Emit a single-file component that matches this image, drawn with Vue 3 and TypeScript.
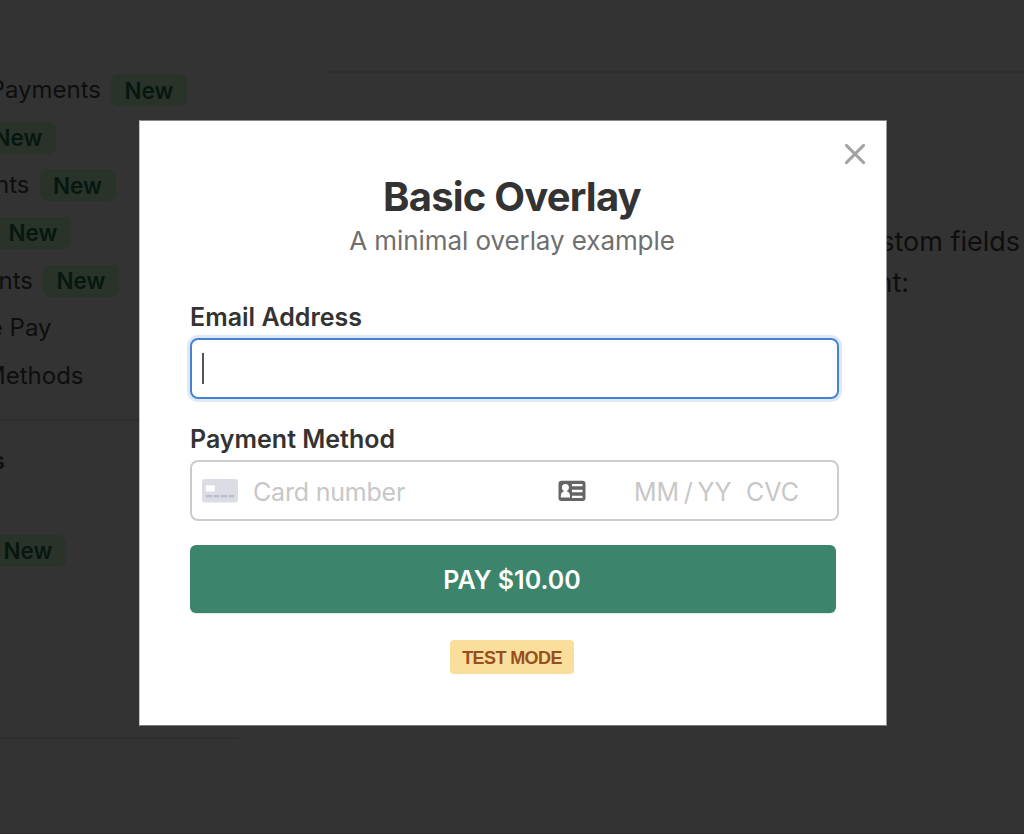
<script setup lang="ts">
interface NavItem {
  label: string
  right: number
  isNew?: boolean
}

// `right` is where each row ends, the sidebar is scrolled out to the left
const navItems: NavItem[] = [
  { label: 'Payments', right: 187, isNew: true },
  { label: '', right: 56, isNew: true },
  { label: 'Payments', right: 115.5, isNew: true },
  { label: '', right: 71, isNew: true },
  { label: 'Payments', right: 119, isNew: true },
  { label: 'Google Pay', right: 51.5 },
  { label: 'Payment Methods', right: 83.5 },
]
</script>

<template>
  <div class="page">
    <aside class="sidebar">
      <ul class="nav">
        <li v-for="(item, i) in navItems" :key="i" class="nav__item" :style="{ width: `${item.right}px` }">
          <span v-if="item.label" class="nav__label">{{ item.label }}</span>
          <span v-if="item.isNew" class="tag">New</span>
        </li>
      </ul>
      <div class="section">
        <div class="section__title">s</div>
        <div class="section__row"><span class="tag">New</span></div>
      </div>
    </aside>
    <main class="content">
      <p class="content__line content__line--first">custom fields</p>
      <p class="content__line content__line--second">payment:</p>
    </main>
  </div>

  <div class="overlay">
    <form class="modal" @submit.prevent>
      <button class="modal__close" type="button" aria-label="Close">
        <svg width="22" height="22" viewBox="0 0 22 22">
          <path d="M2.4 2.4 19.6 19.6M19.6 2.4 2.4 19.6" fill="none" stroke="#a3a3a3" stroke-width="3" stroke-linecap="round" />
        </svg>
      </button>
      <h1 class="modal__title"><span>Basic Overlay</span></h1>
      <p class="modal__subtitle"><span>A minimal overlay example</span></p>

      <div class="label label--email"><span>Email Address</span></div>
      <div class="field field--focus">
        <span class="caret" />
      </div>

      <div class="label label--payment"><span>Payment Method</span></div>
      <div class="field">
        <svg class="field__card" width="36" height="24" viewBox="0 0 36 24">
          <rect width="36" height="23.5" rx="2.4" fill="#dcdde4" />
          <rect x="3.8" y="6.3" width="9" height="6.2" rx="1" fill="#fff" />
          <path d="M4 17.2h6M11.5 17.2h6M19 17.2h6M26.5 17.2h5.5" stroke="#b8bccb" stroke-width="2.2" />
        </svg>
        <span class="field__number">Card number</span>
        <svg class="field__id" width="28" height="22" viewBox="0 0 28 22">
          <rect x="0.5" y="0.7" width="27" height="20.4" rx="3" fill="#666" />
          <circle cx="7.4" cy="7.4" r="3.5" fill="#fff" />
          <path d="M5.8 9.5h3.2v2c2 .5 3 2 3 4.8v1.3H2.8v-1.3c0-2.8 1-4.3 3-4.8z" fill="#fff" />
          <path d="M14 5.2h10.5M14 11h10.5M14 16.8h10.5" stroke="#fff" stroke-width="2.3" />
        </svg>
        <span class="field__expiry">MM / YY</span>
        <span class="field__cvc">CVC</span>
      </div>

      <button class="pay" type="submit"><span>PAY $10.00</span></button>
      <div class="mode"><span>TEST MODE</span></div>
    </form>
  </div>
</template>

<style>
body {
  margin: 0;
  background: #333;
}
</style>

<style scoped>
.page {
  display: flex;
  gap: 90px;
  box-sizing: border-box;
  width: 1024px;
  height: 834px;
  overflow: hidden;
  background: #333;
  border-bottom: 1px solid #2d2a2b;
  color: #0e0e0e;
  font-family: Inter, sans-serif;
}
.sidebar {
  width: 238px;
  flex: none;
  overflow: hidden;
}
.nav {
  display: grid;
  grid-auto-rows: 47.6px;
  margin: 0;
  padding: 66.4px 0 19.4px;
  list-style: none;
  border-bottom: 2px solid #2e2e2e;
}
.nav__item {
  display: flex;
  align-items: center;
  justify-content: flex-end;
  gap: 10px;
  white-space: nowrap;
}
.nav__label {
  flex: none;
  padding-bottom: 1px;
  font-size: 24px;
}
.tag {
  display: flex;
  flex: none;
  align-items: center;
  justify-content: center;
  width: 76px;
  height: 32px;
  border-radius: 8px;
  background: #29332a;
  color: #061710;
  font-size: 22.5px;
  font-weight: 600;
}
.section {
  box-sizing: border-box;
  height: 318px;
  padding-top: 25px;
  border-bottom: 2px solid #2e2e2e;
}
.section__title {
  display: flex;
  justify-content: flex-end;
  width: 5px;
  font-size: 23px;
  font-weight: 600;
  line-height: 30px;
}
.section__row {
  display: flex;
  justify-content: flex-end;
  width: 66px;
  padding-top: 59px;
}
.content {
  flex: 1;
  margin-top: 71px;
  border-top: 2px solid #2e2e2e;
}
.content__line {
  margin: 0;
  font-size: 27px;
  line-height: 41px;
  text-align: right;
}
.content__line--first {
  padding: 148px 4px 0 0;
}
.content__line--second {
  padding-right: 115px;
}

.overlay {
  position: absolute;
  inset: 0;
  display: flex;
  align-items: flex-start;
  padding: 120px 0 0 139px;
}
.modal {
  position: relative;
  display: flex;
  flex-direction: column;
  box-sizing: border-box;
  width: 748px;
  height: 606px;
  padding: 0 47px 0 50px;
  border: 1px solid;
  border-color: #888 #999 #777 #c4c4c4;
  background: #fff;
  color: #333;
  font-family: Inter, "Liberation Sans", sans-serif;
  white-space: nowrap;
}
.modal__close {
  position: absolute;
  top: 22px;
  right: 20px;
  display: flex;
  padding: 0;
  border: 0;
  background: transparent;
  cursor: pointer;
}
.modal__title {
  margin: 51px 5px 0 0;
  font-size: 40px;
  font-weight: 700;
  line-height: 50px;
  letter-spacing: -0.8px;
  text-align: center;
}
.modal__subtitle {
  margin: 2px 5px 0 0;
  color: #6f6f6f;
  font-size: 26px;
  line-height: 34px;
  letter-spacing: -0.08px;
  text-align: center;
}
.label {
  height: 32px;
  font-size: 25px;
  font-weight: 600;
  line-height: 32px;
}
.label--email {
  margin: 43px 0 5px;
}
.label--payment {
  margin: 24px 0 5px;
}
.field {
  display: flex;
  align-items: center;
  box-sizing: border-box;
  width: 649px;
  height: 61px;
  padding-left: 10px;
  border: 2px solid #ccc;
  border-radius: 8px;
  color: #c7c7c7;
  font-size: 25px;
}
.field--focus {
  border-color: #4483d3;
  box-shadow: 0 0 0 3px #dfe9f5;
}
.caret {
  width: 2px;
  height: 31px;
  background: #555;
}
.field__card {
  flex: none;
}
.field__number,
.field__expiry,
.field__cvc {
  padding-top: 2px;
}
.field__number {
  width: 305px;
  margin-left: 15px;
  letter-spacing: -0.2px;
}
.field__id {
  flex: none;
}
.field__expiry {
  width: 112px;
  margin-left: 48px;
  word-spacing: -2.4px;
}
.pay {
  display: flex;
  align-items: center;
  justify-content: center;
  width: 646px;
  height: 68px;
  margin-top: 24px;
  padding: 2px 2px 0 0;
  border: 0;
  border-radius: 6px;
  background: #3c846b;
  box-shadow: 0 1px 1px #e2e8e5;
  color: #fff;
  font-family: inherit;
  font-size: 25px;
  font-weight: 600;
  cursor: pointer;
}
.mode {
  display: flex;
  align-items: center;
  justify-content: center;
  box-sizing: border-box;
  width: 124px;
  height: 34px;
  margin: 27px 0 0 260px;
  padding-top: 2px;
  border-radius: 4px;
  background: #fadf9c;
  color: #984f1f;
  font-family: "Liberation Sans", sans-serif;
  font-size: 18px;
  font-weight: 700;
  letter-spacing: -0.6px;
}
</style>
